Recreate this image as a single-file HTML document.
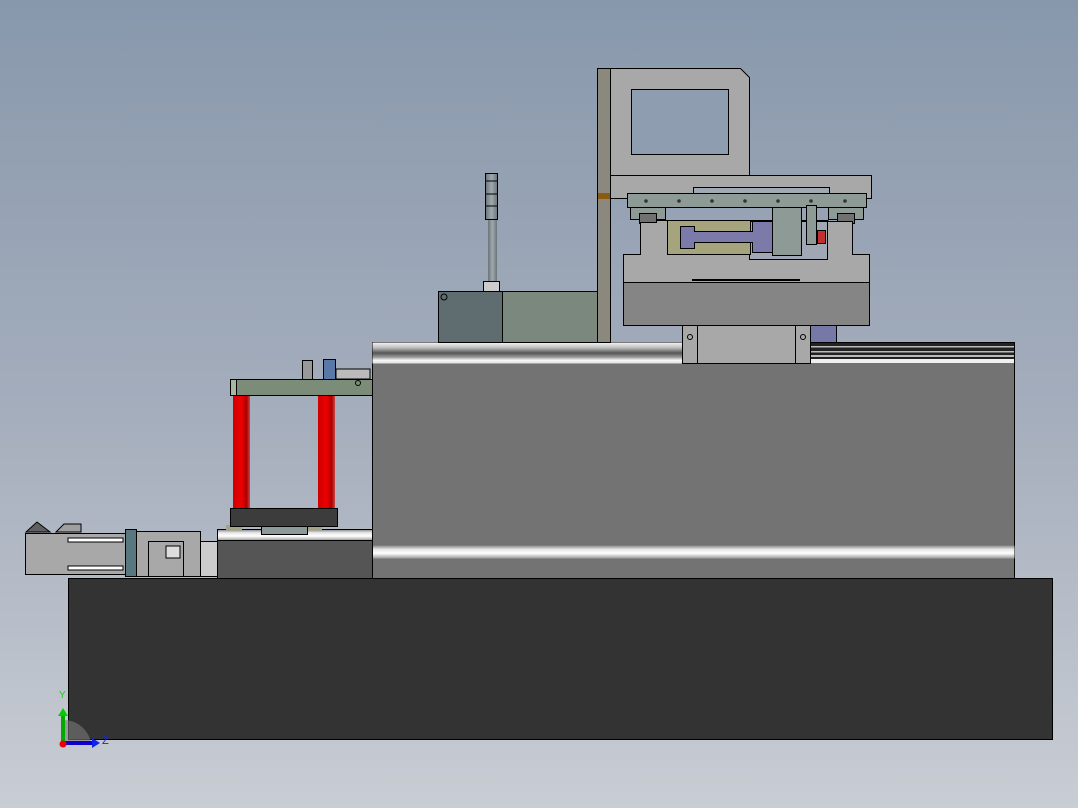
<!DOCTYPE html>
<html><head><meta charset="utf-8"><style>
html,body{margin:0;padding:0;width:1078px;height:808px;overflow:hidden}
svg{display:block}
</style></head><body>
<svg width="1078" height="808" viewBox="0 0 1078 808" xmlns="http://www.w3.org/2000/svg">
<defs>
<linearGradient id="bg" x1="0" y1="0" x2="0" y2="1">
<stop offset="0" stop-color="#8898ac"/><stop offset="0.5" stop-color="#a4adbc"/><stop offset="1" stop-color="#c9cdd4"/>
</linearGradient>
<linearGradient id="rail" x1="0" y1="0" x2="0" y2="1">
<stop offset="0" stop-color="#f4f4f4"/><stop offset="0.25" stop-color="#bdbdbd"/><stop offset="0.5" stop-color="#555"/><stop offset="0.7" stop-color="#9a9a9a"/><stop offset="0.85" stop-color="#fafafa"/><stop offset="1" stop-color="#dcdcdc"/>
</linearGradient>
<linearGradient id="rail2" x1="0" y1="0" x2="0" y2="1">
<stop offset="0" stop-color="#888"/><stop offset="0.3" stop-color="#e8e8e8"/><stop offset="0.6" stop-color="#fff"/><stop offset="1" stop-color="#999"/>
</linearGradient>
<linearGradient id="red" x1="0" y1="0" x2="1" y2="0">
<stop offset="0" stop-color="#c00"/><stop offset="0.5" stop-color="#e00"/><stop offset="0.8" stop-color="#a00"/><stop offset="1" stop-color="#c44"/>
</linearGradient>
<linearGradient id="stick" x1="0" y1="0" x2="1" y2="0">
<stop offset="0" stop-color="#6a7478"/><stop offset="0.5" stop-color="#a0aaae"/><stop offset="1" stop-color="#6a7478"/>
</linearGradient>
</defs>
<rect width="1078" height="808" fill="url(#bg)"/>
<g stroke="#000" stroke-width="1">
<rect x="68.5" y="578.5" width="984" height="161" fill="#333"/>
<rect x="372.5" y="342.5" width="642" height="236" fill="#737373"/>
<rect x="372.5" y="342.5" width="310" height="21" fill="url(#rail)" stroke="none"/>
<rect x="810" y="343" width="204" height="20" fill="#222" stroke="none"/>
<g stroke="none" fill="#bbb"><rect x="810" y="346" width="204" height="1.5"/><rect x="810" y="351" width="204" height="1.5"/><rect x="810" y="355" width="204" height="2"/></g>
<rect x="810" y="359" width="204" height="4" fill="#f0f0f0" stroke="none"/>
<rect x="372.5" y="545.5" width="642" height="13" fill="url(#rail2)" stroke="none"/>
<rect x="438.5" y="291.5" width="64" height="51" fill="#5f6d70"/>
<rect x="502.5" y="291.5" width="95" height="51" fill="#7a887e"/>
<circle cx="444" cy="297" r="3" fill="none"/>
<rect x="483.5" y="281.5" width="16" height="10" fill="#ccc"/>
<rect x="488" y="219" width="9" height="62" fill="url(#stick)" stroke="none"/>
<rect x="485.5" y="173.5" width="12" height="46" fill="url(#stick)"/>
<line x1="486" y1="181" x2="497" y2="181"/><line x1="486" y1="194" x2="497" y2="194"/><line x1="486" y1="206" x2="497" y2="206"/>
<rect x="597.5" y="68.5" width="13" height="274" fill="#8b897e"/>
<rect x="598" y="193" width="12" height="6" fill="#8a5a10" stroke="none"/>
<path d="M610.5 68.5 H740.5 L749.5 77.5 V175.5 H610.5 Z" fill="#a8a8a8"/>
<rect x="631.5" y="89.5" width="97" height="65" fill="#8e9db0"/>
<rect x="610.5" y="175.5" width="261" height="23" fill="#a8a8a8"/>
<rect x="693.5" y="187.5" width="136" height="6" fill="#a0a8b4"/>
<rect x="627.5" y="193.5" width="239" height="14" fill="#8e9a96"/>
<g fill="#333" stroke="none"><circle cx="646" cy="201" r="1.8"/><circle cx="679" cy="201" r="1.8"/><circle cx="712" cy="201" r="1.8"/><circle cx="745" cy="201" r="1.8"/><circle cx="778" cy="201" r="1.8"/><circle cx="811" cy="201" r="1.8"/><circle cx="845" cy="201" r="1.8"/></g>
<rect x="630.5" y="207.5" width="35" height="12" fill="#8e9a96"/>
<rect x="828.5" y="207.5" width="35" height="12" fill="#8e9a96"/>
<rect x="639.5" y="213.5" width="17" height="10" fill="#707070"/>
<rect x="837.5" y="213.5" width="17" height="10" fill="#707070"/>
<path d="M640.5 222.5 H656.5 V220.5 H828 V221.5 H852.5 V254.5 H869.5 V282.5 H623.5 V254.5 H640.5 Z" fill="#a8a8a8"/>
<rect x="749.5" y="221.5" width="78" height="38" fill="#a0a8b6"/>
<rect x="667.5" y="220.5" width="83" height="34" fill="#a6a47c"/>
<path d="M680.5 226.5 H694.5 V231.5 H752.5 V221.5 H773.5 V252.5 H752.5 V242.5 H694.5 V248.5 H680.5 Z" fill="#7b7aa8"/>
<rect x="772.5" y="207.5" width="29" height="48" fill="#8e9a96"/>
<rect x="806.5" y="205.5" width="10" height="39" fill="#8e9a96"/>
<rect x="817.5" y="230.5" width="8" height="13" fill="#c03030"/>
<rect x="623.5" y="282.5" width="246" height="43" fill="#858585"/>
<line x1="692" y1="280" x2="800" y2="280" stroke-width="2"/>
<rect x="810.5" y="325.5" width="26" height="17" fill="#7678a8"/>
<rect x="682.5" y="325.5" width="128" height="38" fill="#a8a8a8"/>
<rect x="682.5" y="325.5" width="15" height="38" fill="#a8a8a8"/>
<rect x="795.5" y="325.5" width="15" height="38" fill="#a8a8a8"/>
<circle cx="690" cy="337" r="2.5" fill="none"/><circle cx="803" cy="337" r="2.5" fill="none"/>
<rect x="217.5" y="529.5" width="155" height="49" fill="#555"/>
<rect x="217.5" y="529.5" width="155" height="11" fill="url(#rail2)"/>
<rect x="226" y="525" width="16" height="5" fill="#a6a47c" stroke="none"/>
<rect x="306" y="525" width="16" height="5" fill="#a6a47c" stroke="none"/>
<rect x="261.5" y="524.5" width="46" height="10" fill="#8e9a9a"/>
<rect x="230.5" y="508.5" width="107" height="18" fill="#3c3c3c"/>
<rect x="233" y="395" width="17" height="113" fill="url(#red)" stroke="none"/>
<rect x="318" y="395" width="17" height="113" fill="url(#red)" stroke="none"/>
<rect x="230.5" y="379.5" width="142" height="16" fill="#7b8c78"/>
<rect x="230.5" y="379.5" width="6" height="16" fill="#a8b8a0"/>
<circle cx="358" cy="383" r="2.5" fill="none"/>
<rect x="302.5" y="360.5" width="10" height="19" fill="#999"/>
<rect x="323.5" y="359.5" width="12" height="20" fill="#5878a8"/>
<rect x="336" y="369" width="34" height="10" fill="#bbb"/>
<rect x="25.5" y="533.5" width="100" height="41" fill="#a8a8a8"/>
<path d="M26 532 L37 522 L50 532 Z" fill="#606060"/>
<path d="M56 532 L64 524 H81 V532 Z" fill="#a0a0a0"/>
<rect x="68" y="538" width="55" height="4" fill="#fff"/>
<rect x="68" y="566" width="55" height="4" fill="#fff"/>
<rect x="125.5" y="529.5" width="11" height="47" fill="#587880"/>
<rect x="136.5" y="531.5" width="64" height="45" fill="#a8a8a8"/>
<rect x="148.5" y="541.5" width="35" height="35" fill="#a8a8a8"/>
<rect x="166" y="546" width="14" height="12" fill="#ddd"/>
<rect x="200.5" y="541.5" width="17" height="35" fill="#ccc"/>
</g>
<path d="M63 743 L63 720 A28 28 0 0 1 91 743 Z" fill="#7a7a7a" opacity="0.6"/>
<rect x="61" y="714" width="4" height="29" fill="#0a0"/>
<path d="M58 716 L63 708 L68 716 Z" fill="#0c0"/>
<rect x="63" y="741" width="30" height="4" fill="#10c"/>
<path d="M92 738 L100 743 L92 748 Z" fill="#12e"/>
<circle cx="63" cy="744" r="3.5" fill="#e00"/>
<text x="59" y="698" font-family="Liberation Sans, sans-serif" font-size="10" fill="#2c2">Y</text>
<text x="102" y="744" font-family="Liberation Sans, sans-serif" font-size="11" fill="#12e">Z</text>
</svg>
</body></html>
